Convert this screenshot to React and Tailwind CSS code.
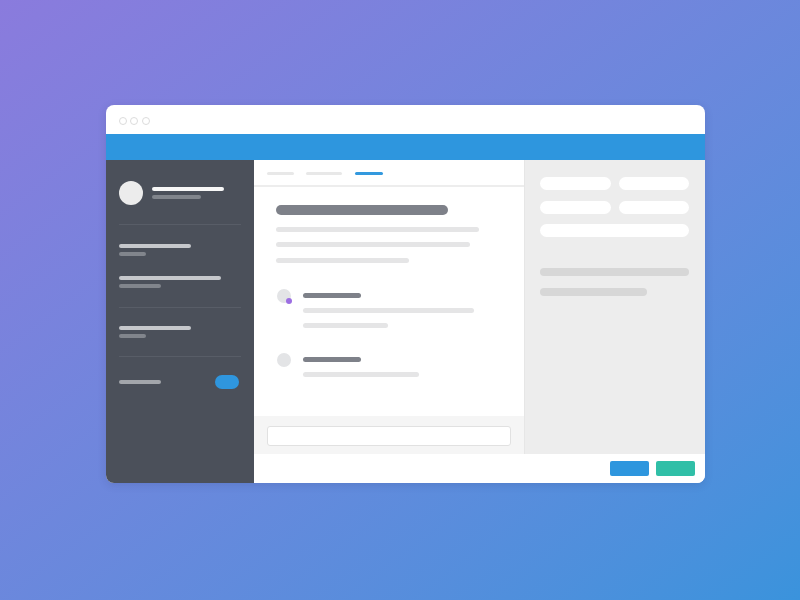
import React from 'react';

const Bar = ({ className }) => <div className={`rounded-full ${className}`} />;

const SidebarItem = ({ main, sub }) => (
  <div className="flex flex-col">
    <Bar className={`h-[4px] bg-[#c6c8cc] ${main}`} />
    <Bar className={`mt-[4px] h-[4px] bg-[#81858c] ${sub}`} />
  </div>
);

const Sidebar = () => (
  <div className="w-[148px] shrink-0 bg-[#4b505a] px-[13px] pt-[21px]">
    {/* Profile */}
    <div className="flex items-center">
      <div className="h-[24px] w-[24px] rounded-full bg-[#ececec]" />
      <div className="ml-[9px] flex flex-col">
        <Bar className="h-[4px] w-[72px] bg-[#f7f7f7]" />
        <Bar className="mt-[4px] h-[4px] w-[49px] bg-[#81858c]" />
      </div>
    </div>
    <div className="mt-[19px] h-px bg-[#585d67]" />
    <div className="mt-[19px]">
      <SidebarItem main="w-[72px]" sub="w-[27px]" />
    </div>
    <div className="mt-[20px]">
      <SidebarItem main="w-[102px]" sub="w-[42px]" />
    </div>
    <div className="mt-[19px] h-px bg-[#585d67]" />
    <div className="mt-[18px]">
      <SidebarItem main="w-[72px]" sub="w-[27px]" />
    </div>
    <div className="mt-[18px] h-px bg-[#585d67]" />
    <div className="mt-[18px] flex items-center justify-between">
      <Bar className="h-[4px] w-[42px] bg-[#a3a6ab]" />
      <div className="mr-[2px] h-[14px] w-[24px] rounded-full bg-[#2f96de]" />
    </div>
  </div>
);

const Message = ({ dot, lines }) => (
  <div className="flex">
    <div className="relative h-[14px] w-[14px] shrink-0 rounded-full bg-[#e3e4e6]">
      {dot && (
        <div className="absolute left-[9px] top-[9px] h-[6px] w-[6px] rounded-full bg-[#9c6ee2]" />
      )}
    </div>
    <div className="ml-[12px] pt-[4px]">
      <Bar className="h-[5px] w-[58px] bg-[#7e8189]" />
      {lines.map((w, i) => (
        <Bar key={i} className={`mt-[10px] h-[5px] bg-[#e5e5e6] ${w}`} />
      ))}
    </div>
  </div>
);

const MainPanel = () => (
  <div className="flex w-[270px] shrink-0 flex-col bg-white">
    {/* Tabs */}
    <div className="flex h-[27px] items-center gap-[12px] border-b-2 border-[#ededed] pl-[13px] pt-[1px]">
      <Bar className="h-[3px] w-[27px] bg-[#e8e8e8]" />
      <Bar className="h-[3px] w-[36px] bg-[#e8e8e8]" />
      <Bar className="ml-[1px] h-[3px] w-[28px] bg-[#3399de]" />
    </div>
    <div className="flex-1 px-[22px] pt-[18px]">
      <Bar className="h-[10px] w-[172px] bg-[#7e8189]" />
      <Bar className="mt-[12px] h-[5px] w-[203px] bg-[#e5e5e6]" />
      <Bar className="mt-[10px] h-[5px] w-[194px] bg-[#e5e5e6]" />
      <Bar className="mt-[11px] h-[5px] w-[133px] bg-[#e5e5e6]" />
      <div className="mt-[26px] pl-[1px]">
        <Message dot lines={['w-[171px]', 'w-[85px]']} />
      </div>
      <div className="mt-[25px] pl-[1px]">
        <Message lines={['w-[116px]']} />
      </div>
    </div>
    {/* Composer */}
    <div className="h-[38px] bg-[#f5f5f5] px-[13px] pt-[10px]">
      <div className="h-[20px] w-[244px] rounded-[3px] border border-[#e1e1e1] bg-white" />
    </div>
  </div>
);

const RightPanel = () => (
  <div className="flex-1 border-l border-[#e6e6e6] bg-[#ededed] pl-[15px] pr-[16px] pt-[17px]">
    <div className="grid grid-cols-2 gap-x-[8px] gap-y-[11px]">
      <div className="h-[13px] rounded-full bg-white" />
      <div className="h-[13px] rounded-full bg-white" />
      <div className="h-[13px] rounded-full bg-white" />
      <div className="h-[13px] rounded-full bg-white" />
      <div className="col-span-2 -mt-[1px] h-[13px] rounded-full bg-white" />
    </div>
    <Bar className="mt-[31px] h-[8px] w-[149px] bg-[#d7d7d7]" />
    <Bar className="mt-[12px] h-[8px] w-[107px] bg-[#d7d7d7]" />
  </div>
);

const App = () => (
  <div className="h-[600px] w-[800px] bg-gradient-to-br from-[#8a7bdd] to-[#3a93dc] pl-[106px] pt-[105px]">
    <div className="flex h-[378px] w-[599px] flex-col overflow-hidden rounded-[8px] bg-white shadow-[0_2px_8px_rgba(40,40,90,0.15)]">
      {/* Title bar */}
      <div className="flex h-[29px] shrink-0 items-center gap-[3.5px] pl-[12.5px] pt-[2px]">
        <div className="h-[8px] w-[8px] rounded-full border-[1.5px] border-[#dcdcdc]" />
        <div className="h-[8px] w-[8px] rounded-full border-[1.5px] border-[#dcdcdc]" />
        <div className="h-[8px] w-[8px] rounded-full border-[1.5px] border-[#dcdcdc]" />
      </div>
      <div className="h-[26px] shrink-0 bg-[#2e96de]" />
      <div className="flex flex-1">
        <Sidebar />
        <div className="flex flex-1 flex-col">
          <div className="flex h-[294px]">
            <MainPanel />
            <RightPanel />
          </div>
          {/* Footer */}
          <div className="flex flex-1 items-start justify-end gap-[7px] bg-white pr-[10px] pt-[7px]">
            <div className="h-[15px] w-[39px] rounded-[2px] bg-[#2e96de]" />
            <div className="h-[15px] w-[39px] rounded-[2px] bg-[#30bfa7]" />
          </div>
        </div>
      </div>
    </div>
  </div>
);

export default App;
